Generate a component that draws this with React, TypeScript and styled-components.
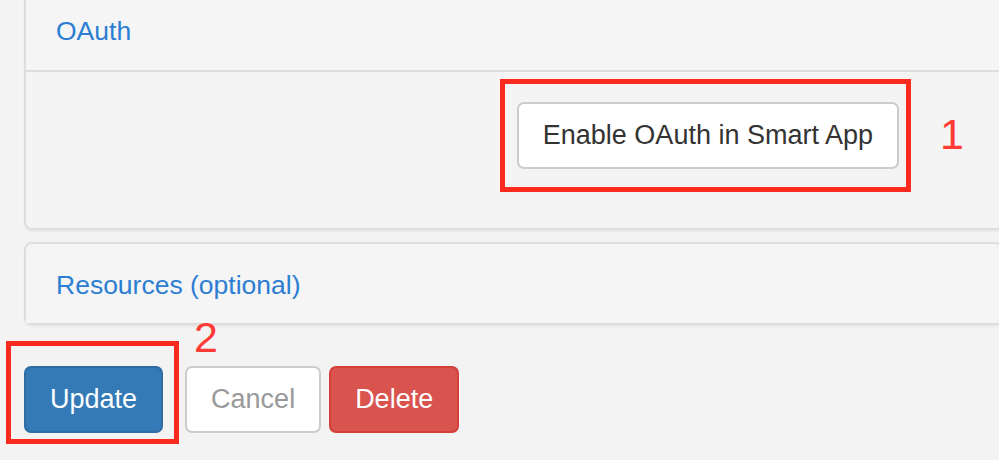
import React from "react";
import styled, { createGlobalStyle } from "styled-components";

const GlobalStyle = createGlobalStyle`
  html, body {
    margin: 0;
    padding: 0;
    background: #f3f3f3;
    overflow: hidden;
  }
  body {
    font-family: "Liberation Sans", Arial, Helvetica, sans-serif;
    font-size: 26.5px;
    color: #333;
  }
  * { box-sizing: border-box; }
`;

const Page = styled.div`
  position: relative;
  display: flex;
  flex-direction: column;
  padding-left: 24px;
  margin-right: -4px;
  height: 460px;
`;

const Panel = styled.section<{ $first?: boolean }>`
  background: #f5f5f5;
  border: 2px solid #dddddd;
  border-radius: 8px;
  box-shadow: 0 2px 2px rgba(0, 0, 0, 0.05);
  margin-top: ${(p) => (p.$first ? "-10px" : "0")};
  margin-bottom: 12px;
`;

const PanelHeading = styled.div<{ $divider?: boolean; $pt: number; $pb: number }>`
  padding: ${(p) => `${p.$pt}px 30px ${p.$pb}px`};
  border-bottom: ${(p) => (p.$divider ? "2px solid #dddddd" : "none")};
  background: #f5f5f5;
  border-radius: 6px 6px 0 0;
`;

const PanelTitle = styled.a`
  display: block;
  color: #2c7ed3;
  text-decoration: none;
  font-size: 26.5px;
  line-height: 30px;
`;

const PanelBody = styled.div`
  display: flex;
  justify-content: flex-end;
  padding: 30px 102px 59px 30px;
  background: #f4f4f4;
  border-radius: 0 0 6px 6px;
`;

type Variant = "default" | "primary" | "danger" | "muted";

const colors: Record<Variant, { bg: string; border: string; fg: string }> = {
  default: { bg: "#ffffff", border: "#cccccc", fg: "#333333" },
  muted: { bg: "#ffffff", border: "#cccccc", fg: "#999999" },
  primary: { bg: "#337ab7", border: "#2e6da4", fg: "#ffffff" },
  danger: { bg: "#d9534f", border: "#d43f3a", fg: "#ffffff" },
};

const Button = styled.button<{ $variant: Variant; $mr?: number }>`
  font-family: "Liberation Sans", Arial, Helvetica, sans-serif;
  font-size: 27px;
  line-height: 31px;
  height: 67px;
  padding: 16px 24px;
  border-radius: 7px;
  border: 2px solid ${(p) => colors[p.$variant].border};
  background: ${(p) => colors[p.$variant].bg};
  color: ${(p) => colors[p.$variant].fg};
  margin-right: ${(p) => p.$mr ?? 0}px;
  cursor: pointer;
  white-space: nowrap;
`;

const Actions = styled.div`
  display: flex;
  align-items: flex-start;
  margin-top: 29px;
`;

const Highlight = styled.div<{ $x: number; $y: number; $w: number; $h: number }>`
  position: absolute;
  left: ${(p) => p.$x}px;
  top: ${(p) => p.$y}px;
  width: ${(p) => p.$w}px;
  height: ${(p) => p.$h}px;
  border: 5px solid #fb2a1f;
  pointer-events: none;
`;

const Marker = styled.span<{ $x: number; $y: number }>`
  position: absolute;
  left: ${(p) => p.$x}px;
  top: ${(p) => p.$y}px;
  font-family: "Liberation Sans", Arial, Helvetica, sans-serif;
  font-size: 43px;
  line-height: 1;
  color: #ff3b36;
`;

export default function App() {
  return (
    <>
      <GlobalStyle />
      <Page>
        <Panel $first>
          <PanelHeading $divider $pt={24} $pb={24}>
            <PanelTitle>OAuth</PanelTitle>
          </PanelHeading>
          <PanelBody>
            <Button $variant="default">Enable OAuth in Smart App</Button>
          </PanelBody>
        </Panel>
        <Panel>
          <PanelHeading $pt={26} $pb={23}>
            <PanelTitle>Resources (optional)</PanelTitle>
          </PanelHeading>
        </Panel>
        <Actions>
          <Button $variant="primary" $mr={22}>Update</Button>
          <Button $variant="muted" $mr={8}>Cancel</Button>
          <Button $variant="danger">Delete</Button>
        </Actions>
        <Highlight $x={500} $y={79} $w={411} $h={113} />
        <Marker $x={940} $y={113}>1</Marker>
        <Highlight $x={6} $y={341} $w={173} $h={103} />
        <Marker $x={194} $y={316}>2</Marker>
      </Page>
    </>
  );
}
